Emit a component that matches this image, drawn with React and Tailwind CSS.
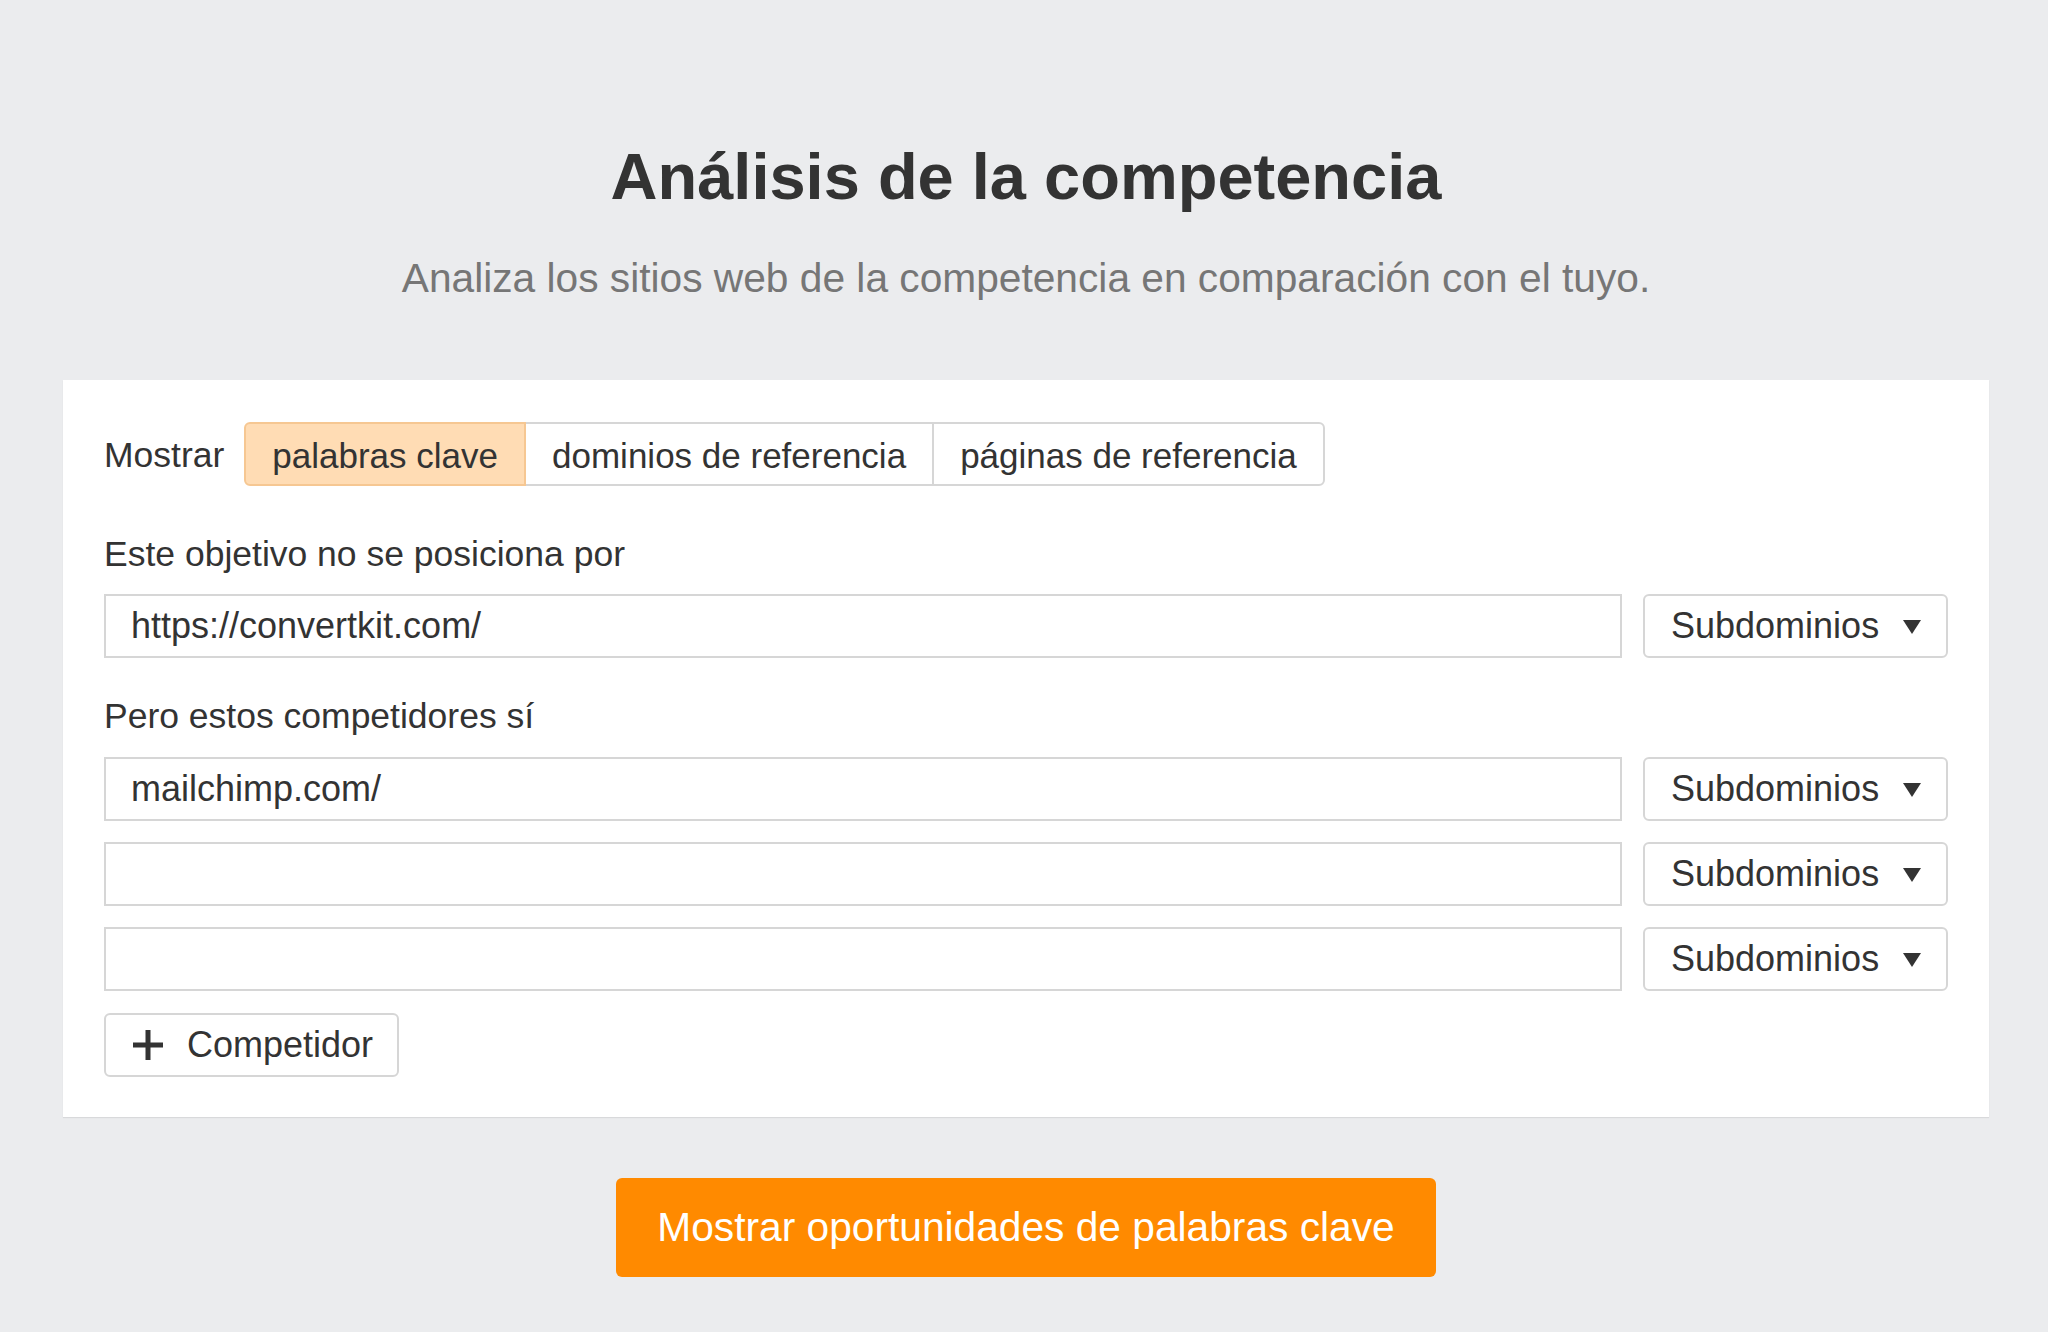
import React from "react";

const Tab = ({ label, active, first, last }) => {
  return (
    <button
      type="button"
      className={
        "h-[64px] px-[26px] pt-[3px] text-[35px] leading-none text-[#333] border-2 " +
        (first ? "rounded-l-[6px] " : "-ml-[2px] ") +
        (last ? "rounded-r-[6px] " : "") +
        (active
          ? "relative z-10 bg-[#ffdcb4] border-[#f6c792]"
          : "bg-white border-[#d6d6d6]")
      }
    >
      {label}
    </button>
  );
};

const SubdomainSelect = () => (
  <div className="w-[305px] h-[64px] shrink-0 flex items-center justify-between pl-[26px] pr-[25px] border-2 border-[#d6d6d6] rounded-[6px] bg-white">
    <span className="text-[36px] leading-none text-[#333]">Subdominios</span>
    <svg width="18" height="14" viewBox="0 0 18 14" className="mt-[1px]">
      <path d="M0 0 H18 L9 14 Z" fill="#333" />
    </svg>
  </div>
);

const UrlRow = ({ value }) => (
  <div className="flex gap-[21px]">
    <input
      type="text"
      defaultValue={value}
      className="flex-1 min-w-0 h-[64px] pl-[25px] border-2 border-[#d6d6d6] bg-white text-[36px] text-[#333] outline-none"
    />
    <SubdomainSelect />
  </div>
);

const App = () => {
  return (
    <div
      className="min-h-screen bg-[#ebecee] pl-[63px] pr-[59px] pb-[55px]"
      style={{ fontFamily: '"Liberation Sans", Arial, sans-serif' }}
    >
      {/* Header */}
      <h1 className="pt-[138px] text-center text-[65px] leading-[78px] font-bold text-[#333]">
        Análisis de la competencia
      </h1>
      <p className="mt-[38px] text-center text-[40.7px] leading-[48px] text-[#767676]">
        Analiza los sitios web de la competencia en comparación con el tuyo.
      </p>

      {/* Form card */}
      <div className="mt-[78px] bg-white pt-[42px] pl-[41px] pr-[41px] pb-[40px] shadow-[0_1px_1px_rgba(0,0,0,0.08)]">
        <div className="flex items-center">
          <span className="pt-[3px] text-[35.5px] leading-none text-[#333] mr-[20px]">Mostrar</span>
          <div className="flex">
            <Tab label="palabras clave" active first />
            <Tab label="dominios de referencia" />
            <Tab label="páginas de referencia" last />
          </div>
        </div>

        <div className="mt-[48px] mb-[20px] text-[35.5px] leading-[40px] text-[#333]">
          Este objetivo no se posiciona por
        </div>
        <UrlRow value="https://convertkit.com/" />

        <div className="mt-[38px] mb-[21px] text-[35.5px] leading-[40px] text-[#333]">
          Pero estos competidores sí
        </div>
        <div className="flex flex-col gap-[21px]">
          <UrlRow value="mailchimp.com/" />
          <UrlRow value="" />
          <UrlRow value="" />
        </div>

        <button
          type="button"
          className="mt-[22px] w-[295px] h-[64px] flex items-center pl-[27px] border-2 border-[#d6d6d6] rounded-[6px] bg-white text-[36px] text-[#333]"
        >
          <svg width="30" height="30" viewBox="0 0 30 30" className="mr-[24px] shrink-0">
            <path d="M15 0 V30 M0 15 H30" stroke="#333" strokeWidth="5" />
          </svg>
          Competidor
        </button>
      </div>

      {/* Submit */}
      <div className="mt-[61px] flex justify-center">
        <button
          type="button"
          className="h-[99px] px-[41px] rounded-[6px] bg-[#ff8a00] text-white text-[40.7px]"
        >
          Mostrar oportunidades de palabras clave
        </button>
      </div>
    </div>
  );
};

export default App;
